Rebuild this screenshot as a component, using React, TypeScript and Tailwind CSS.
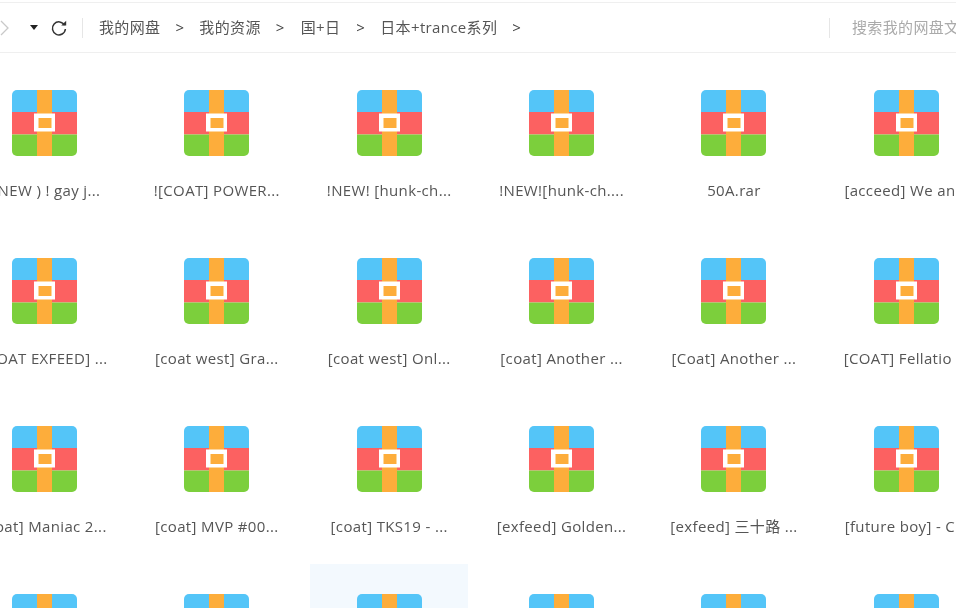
import React from 'react';

const files = [
  '(!NEW ) ! gay j...', '![COAT] POWER...', '!NEW! [hunk-ch...', '!NEW![hunk-ch....', '50A.rar', '[acceed] We an...',
  '[COAT EXFEED] ...', '[coat west] Gra...', '[coat west] Onl...', '[coat] Another ...', '[Coat] Another ...', '[COAT] Fellatio ...',
  '[coat] Maniac 2...', '[coat] MVP #00...', '[coat] TKS19 - ...', '[exfeed] Golden...', '[exfeed] 三十路 ...', '[future boy] - C...',
  '', '', '', '', '', '',
];

const crumbs = [
  { label: '我的网盘', pad: '' },
  { label: '我的资源', pad: '' },
  { label: '国+日', pad: 'px-px' },
  { label: '日本+trance系列', pad: '' },
];

const RarIcon = () => (
  <svg width="65" height="66" viewBox="0 0 65 66" className="block">
    <defs>
      <clipPath id="box">
        <rect x="0" y="0" width="65" height="66" rx="5" />
      </clipPath>
    </defs>
    <g clipPath="url(#box)">
      <rect x="0" y="0" width="65" height="22" fill="#54c5f8" />
      <rect x="0" y="22" width="65" height="22.5" fill="#fc6161" />
      <rect x="0" y="44.5" width="65" height="21.5" fill="#7ccf3c" />
      <rect x="25" y="0" width="15" height="66" fill="#fdad3b" />
      <rect x="22" y="23.5" width="21" height="18" fill="#fff" />
      <rect x="26.5" y="28" width="13" height="10" fill="#fdad3b" />
    </g>
  </svg>
);

const FileCell = ({ name, selected }: { name: string; selected: boolean }) => (
  <div className={`h-[158px] flex flex-col items-center pt-[30px] ${selected ? 'bg-[#f3f9fe]' : ''}`}>
    <RarIcon />
    <div className="mt-[24px] h-5 leading-5 text-[15px] tracking-[0.35px] text-[#555] whitespace-nowrap">{name}</div>
  </div>
);

export default function App() {
  return (
    <div className="w-[956px] h-[608px] overflow-hidden bg-white blur-[0.35px]" style={{ fontFamily: '"Open Sans", "Noto Sans CJK SC", sans-serif' }}>
      <div className="mt-[2px] h-[51px] border-y border-[#efefef] flex items-center text-[15px] tracking-[0.35px] text-[#555] whitespace-nowrap">
        <svg width="10" height="16" viewBox="0 0 10 16" className="-ml-px">
          <path d="M2 1l7 7-7 7" fill="none" stroke="#c9c9c9" strokeWidth="1.3" />
        </svg>
        <svg width="8" height="5" viewBox="0 0 8 5" className="ml-[21px]">
          <path d="M0 0h8L4 5z" fill="#222" />
        </svg>
        <svg width="18" height="18" viewBox="0 0 18 18" className="ml-[12px]">
          <path d="M14.6 6.2A6.5 6.5 0 1 0 15.4 10" fill="none" stroke="#333" strokeWidth="1.5" />
          <path d="M11.2 6.6h5V1.8z" fill="#333" />
        </svg>
        <div className="ml-[14px] w-px h-5 bg-[#e6e6e6]" />
        <div className="ml-[16px] flex items-center">
          {crumbs.map(c => (
            <React.Fragment key={c.label}>
              <span className={c.pad}>{c.label}</span>
              <span className="mx-[15px] text-[#444]">&gt;</span>
            </React.Fragment>
          ))}
        </div>
        <div className="ml-auto w-px h-5 bg-[#e6e6e6]" />
        <span className="ml-[22px] w-[104px] shrink-0 overflow-hidden text-[#aaa]">搜索我的网盘文件</span>
      </div>
      <div className="pt-[7.3px] -ml-[34.6px] w-max grid grid-cols-[repeat(6,158px)] gap-x-[14.4px] gap-y-[9.8px]">
        {files.map((name, i) => (
          <FileCell key={i} name={name} selected={i === 20} />
        ))}
      </div>
    </div>
  );
}
